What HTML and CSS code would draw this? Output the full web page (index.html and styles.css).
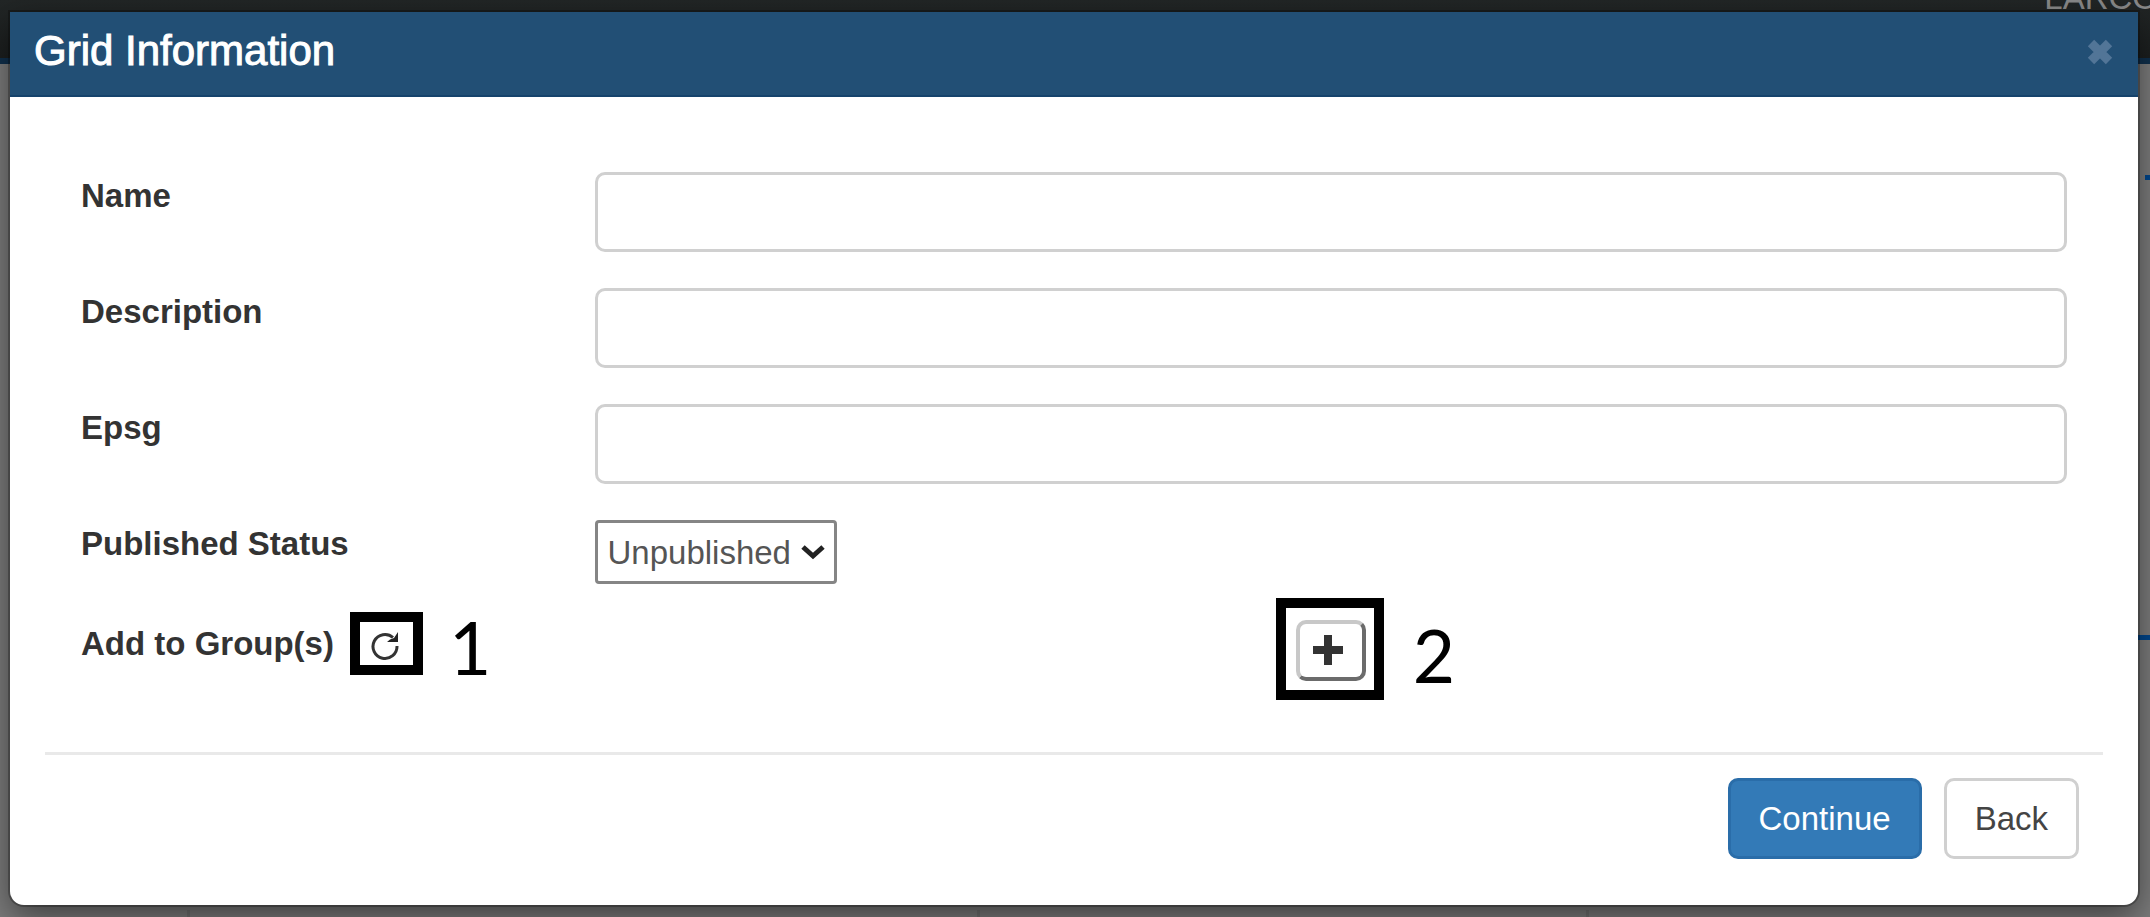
FILE: index.html
```html
<!DOCTYPE html>
<html lang="en">
<head>
<meta charset="utf-8">
<title>Grid Information</title>
<link rel="stylesheet" href="styles.css">
</head>
<body>
<nav class="navbar"><a class="navbar-link" href="#">LARCO</a></nav>
<div class="backdrop-marks" aria-hidden="true">
  <span class="mark mark-short"></span>
  <span class="mark mark-long"></span>
  <span class="tick tick-a"></span>
  <span class="tick tick-b"></span>
  <span class="tick tick-c"></span>
</div>
<main class="modal" role="dialog" aria-labelledby="modal-title">
  <header class="modal-header">
    <h1 class="modal-title" id="modal-title">Grid Information</h1>
    <button class="close" type="button" aria-label="Close">
      <svg class="close-icon" viewBox="0 0 28 28"><path d="M5 5L23 23M23 5L5 23"/></svg>
    </button>
  </header>
  <form class="modal-form">
    <div class="fields">
      <div class="row">
        <div class="cell"><label for="name">Name</label></div>
        <div class="cell"><input class="text-input" id="name" type="text"></div>
      </div>
      <div class="row">
        <div class="cell"><label for="description">Description</label></div>
        <div class="cell"><input class="text-input" id="description" type="text"></div>
      </div>
      <div class="row">
        <div class="cell"><label for="epsg">Epsg</label></div>
        <div class="cell"><input class="text-input" id="epsg" type="text"></div>
      </div>
      <div class="row">
        <div class="cell"><label for="status">Published Status</label></div>
        <div class="cell">
          <div class="select-wrap">
            <select class="select" id="status"><option>Unpublished</option></select>
            <svg class="chevron" viewBox="0 0 24 16" aria-hidden="true"><path d="M2 3L12 12L22 3"/></svg>
          </div>
        </div>
      </div>
      <div class="row">
        <div class="cell group-label">
          <label for="add-group">Add to Group(s)</label>
          <span class="callout callout-refresh">
            <button class="refresh" type="button" aria-label="Refresh groups">
              <svg class="refresh-icon" viewBox="0 0 28 30"><path class="arc" d="M22 6.500A12 12 0 1 0 26 15"/><path class="head" d="M27 1V11H16L19 8.500L23 7Z"/></svg>
            </button>
            <span class="number">1</span>
          </span>
        </div>
        <div class="cell add-cell">
          <span class="callout callout-add">
            <button class="add" id="add-group" type="button" aria-label="Add group">
              <svg class="add-icon" viewBox="0 0 30 30"><path d="M15 0V30M0 15H30"/></svg>
            </button>
            <span class="number">2</span>
          </span>
        </div>
      </div>
    </div>
    <footer class="modal-footer">
      <button class="btn btn-primary" type="button">Continue</button>
      <button class="btn btn-default" type="button">Back</button>
    </footer>
  </form>
</main>
</body>
</html>
```
FILE: styles.css
```css
* {
  box-sizing: border-box;
}

body {
  margin: 0;
  min-height: 100vh;
  position: relative;
  overflow: hidden;
  background: #7c7c7c;
  color: #333;
  font: 33px/47px "Liberation Sans", Arial, sans-serif;
}

/* page behind the dialog */
.navbar {
  position: absolute;
  inset: 0 0 auto;
  height: 64px;
  overflow: hidden;
  background: linear-gradient(#222626, #1c1f1f);
  border-bottom: 6px solid #10304d;
}

.navbar-link {
  position: absolute;
  right: -8px;
  top: -26px;
  color: #8a8a8a;
  text-decoration: none;
}

.mark,
.tick {
  position: absolute;
}

.mark {
  right: 0;
  height: 5px;
  background: #00468c;
}

.mark-short {
  top: 175px;
  width: 5px;
}

.mark-long {
  top: 635px;
  width: 12px;
}

.tick {
  bottom: 0;
  width: 3px;
  height: 7px;
  background: #707070;
}

.tick-a {
  left: 187px;
}

.tick-b {
  left: 977px;
}

.tick-c {
  left: 1586px;
}

/* dialog */
.modal {
  position: relative;
  margin: 12px 12px 0 10px;
  background: #fff;
  border-radius: 0 0 14px 14px;
  box-shadow: 0 0 0 2px rgba(0, 0, 0, 0.25), 0 12px 35px rgba(0, 0, 0, 0.5);
}

.modal-header {
  display: flex;
  align-items: center;
  justify-content: space-between;
  height: 85px;
  padding: 0 24px;
  background: #224f75;
  border-bottom: 2px solid #16436c;
}

.modal-title {
  margin: 0;
  padding-bottom: 6px;
  color: #fff;
  font-size: 42px;
  font-weight: 400;
  line-height: 60px;
  -webkit-text-stroke: 1px #fff;
}

.close,
.refresh {
  display: flex;
  padding: 0;
  border: 0;
  background: none;
}

.close-icon {
  width: 28px;
  height: 28px;
  margin-bottom: 4px;
  fill: none;
  stroke: #527597;
  stroke-width: 9;
  stroke-linejoin: round;
  overflow: visible;
}

.modal-form {
  padding: 75px 35px 46px;
}

.fields {
  display: grid;
  gap: 36px;
  padding-bottom: 71px;
  border-bottom: 3px solid #e9e9e9;
}

.row {
  display: grid;
  grid-template-columns: 1fr 3fr;
}

.cell {
  min-width: 0;
  padding: 0 36px;
}

.cell + .cell {
  padding-left: 35px;
}

label {
  font-weight: 700;
}

.text-input {
  display: block;
  width: 100%;
  height: 80px;
  padding: 0 28px;
  border: 3px solid #d0d0d0;
  border-radius: 10px;
  background: #fff;
  color: #555;
  font: inherit;
}

.select-wrap {
  display: inline-block;
  position: relative;
  vertical-align: top;
}

.select {
  display: block;
  width: 242px;
  height: 64px;
  padding: 0 10px;
  appearance: none;
  border: 3px solid #858585;
  border-radius: 4px;
  background: #fff;
  color: #555;
  font: inherit;
}

.chevron {
  position: absolute;
  right: 12px;
  top: 24px;
  width: 24px;
  height: 16px;
  fill: none;
  stroke: #222;
  stroke-width: 5;
  pointer-events: none;
}

/* numbered callouts */
.group-label {
  display: flex;
  align-items: flex-start;
  gap: 37px;
  white-space: nowrap;
}

.callout {
  position: relative;
}

.callout::before {
  content: "";
  position: absolute;
  border: 10px solid #000;
  pointer-events: none;
}

.callout-refresh {
  margin-top: 11px;
}

.callout-refresh::before {
  inset: -19px -24px -14px -21px;
}

.callout-add::before {
  inset: -22px -18px -19px -20px;
}

.number {
  position: absolute;
  top: 50%;
  color: #000;
  font: 73px/80px Lato, sans-serif;
}

.callout-refresh .number {
  left: 78px;
  margin-top: -39px;
}

.callout-add .number {
  left: 117px;
  margin-top: -36px;
}

.refresh-icon {
  width: 28px;
  height: 30px;
}

.refresh-icon .arc {
  fill: none;
  stroke: #333;
  stroke-width: 3;
}

.refresh-icon .head {
  fill: #222;
}

.add-cell {
  display: flex;
  justify-content: center;
}

.add {
  display: flex;
  align-items: center;
  justify-content: center;
  width: 70px;
  height: 61px;
  padding: 0 6px 2px 0;
  border: 4px solid;
  border-color: #c8c8c8 #6b6b6b #6b6b6b #c8c8c8;
  border-radius: 10px;
  background: #fff;
}

.add-icon {
  width: 30px;
  height: 30px;
  stroke: #333;
  stroke-width: 8;
}

.modal-footer {
  display: flex;
  justify-content: flex-end;
  gap: 22px;
  padding: 23px 24px 0 0;
}

.btn {
  height: 81px;
  padding: 0 28px;
  border: 3px solid #d0d0d0;
  border-radius: 10px;
  background: #fff;
  color: #444;
  font: inherit;
}

.btn-primary {
  border-color: #2a6da9;
  background: #337ab7;
  color: #fff;
}
```
